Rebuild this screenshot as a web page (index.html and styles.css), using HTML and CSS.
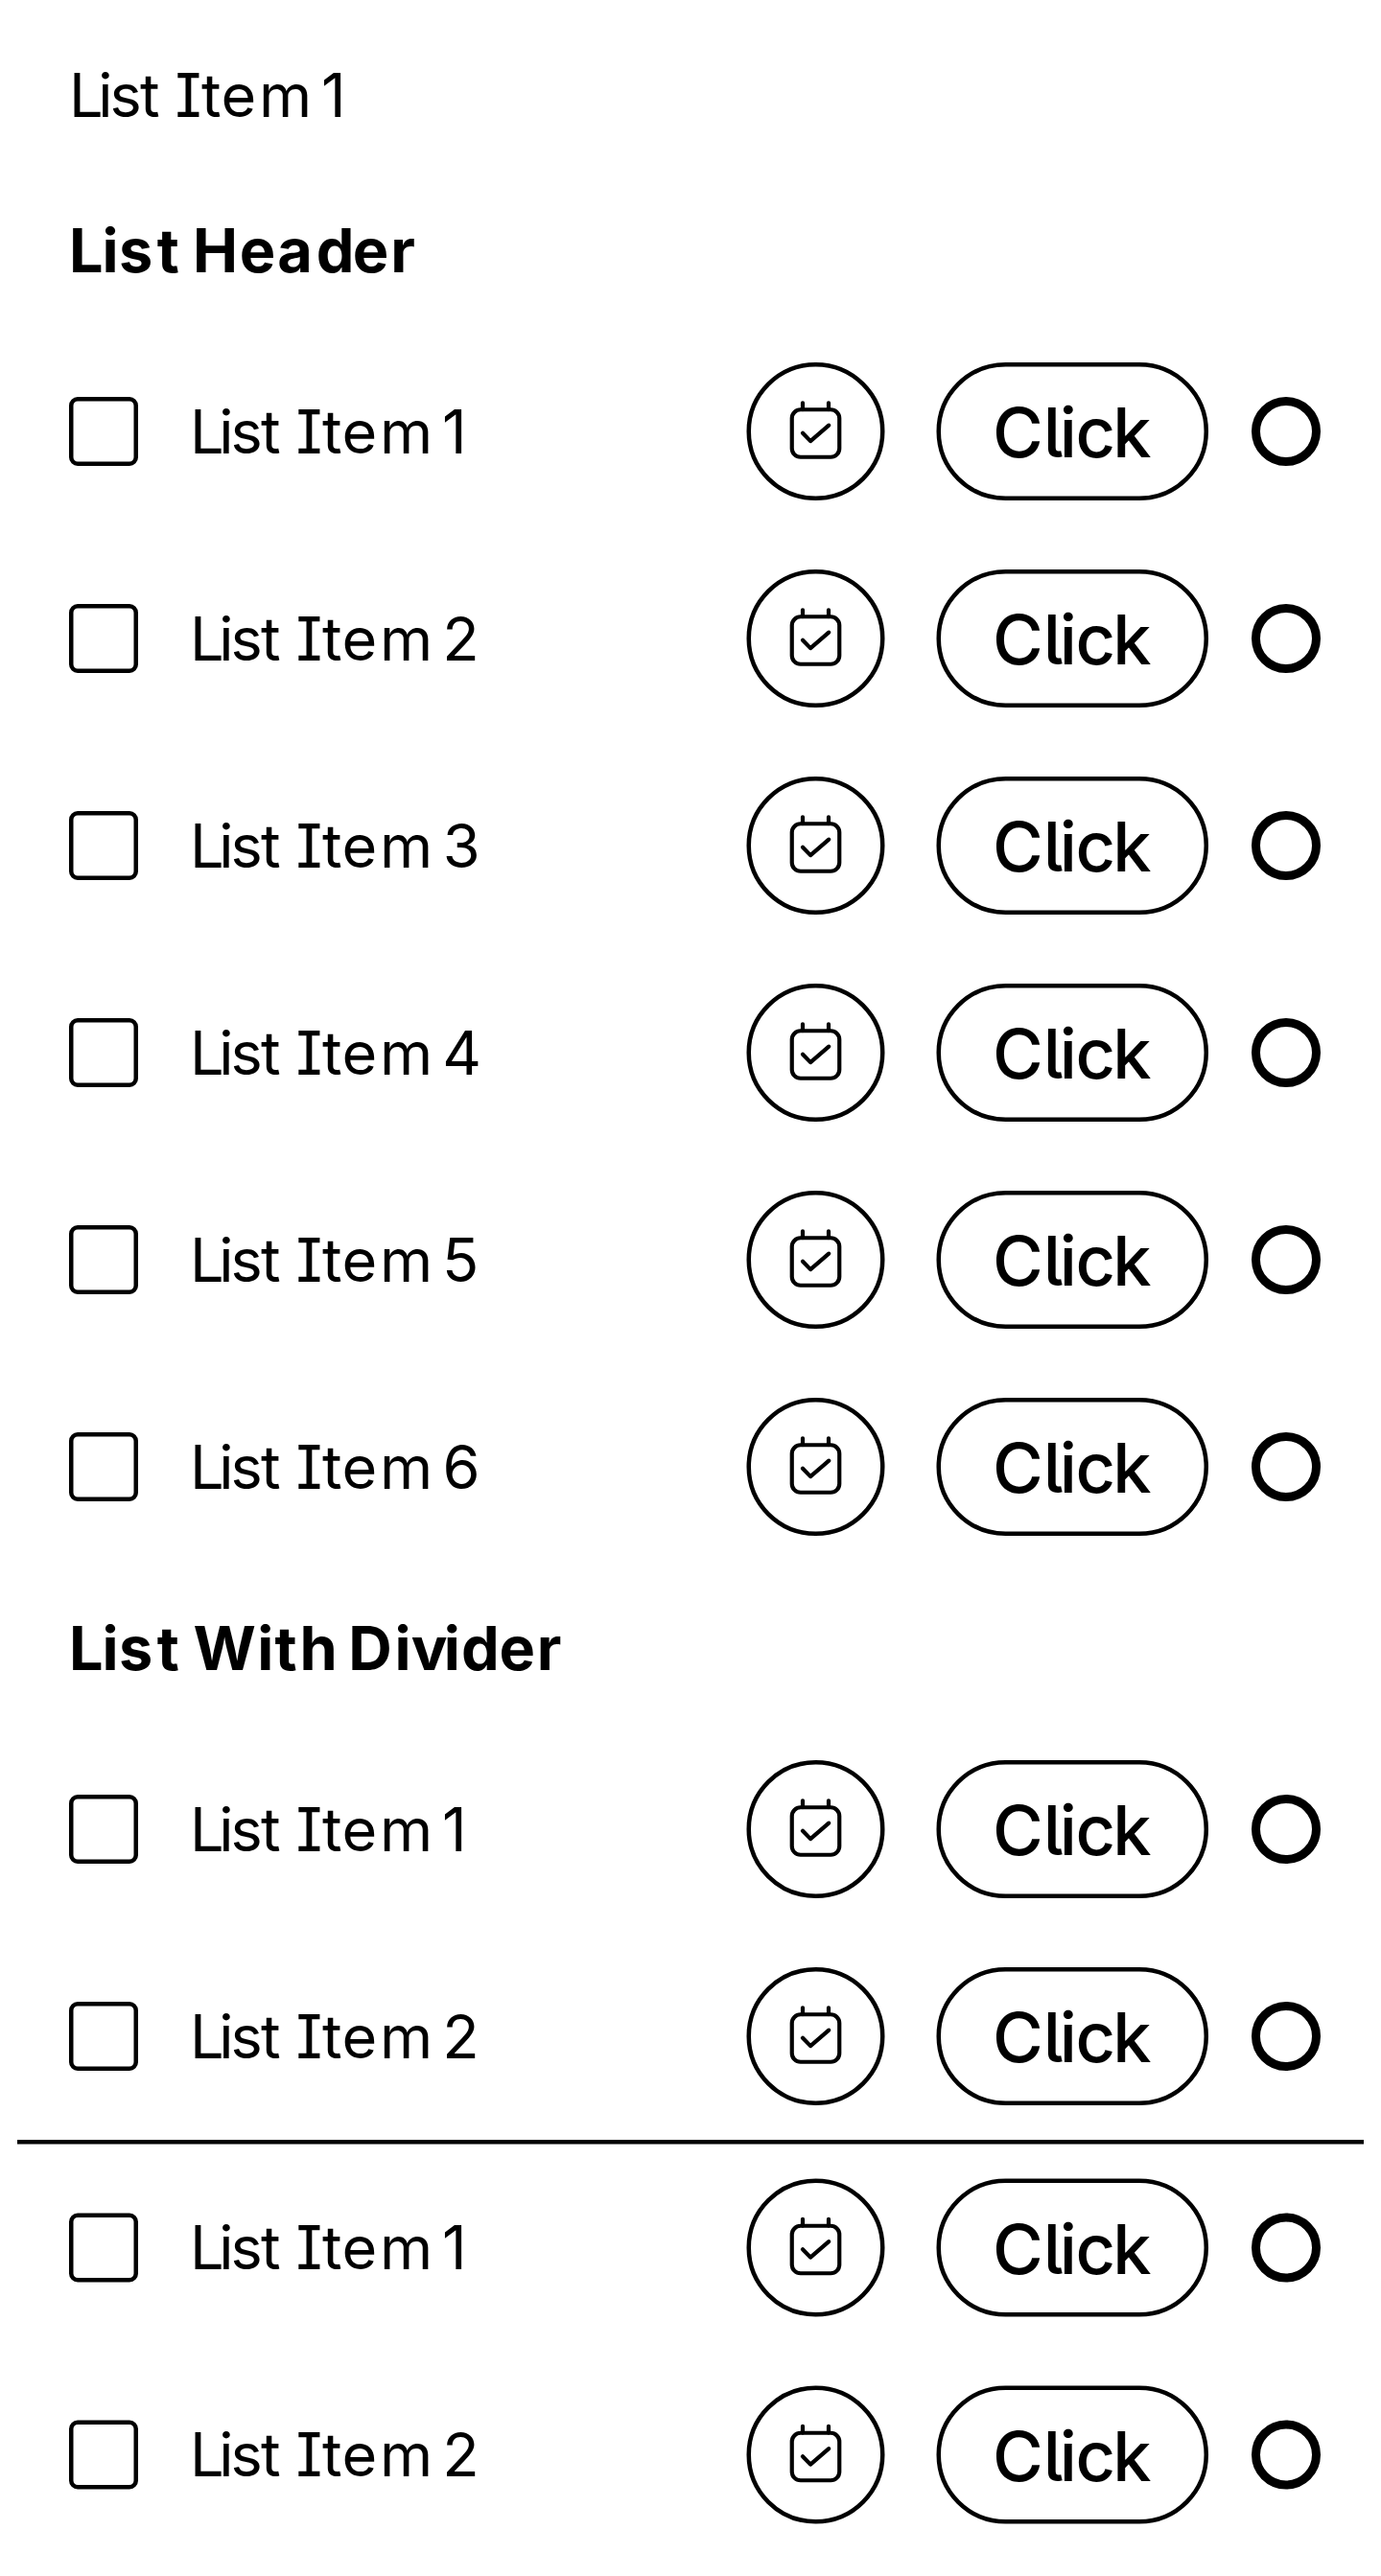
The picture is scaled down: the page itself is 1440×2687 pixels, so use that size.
FILE: index.html
```
<!DOCTYPE html>
<html lang="en">
<head>
<meta charset="utf-8">
<title>Lists</title>
<link rel="stylesheet" href="styles.css">
</head>
<body>
<svg class="sprite" aria-hidden="true">
  <symbol id="calendar-check" viewBox="0 0 16 16">
    <rect x="2.5" y="2.95" width="11" height="11" rx="2"/>
    <path d="M5 1.4V2.9M11 1.4V2.9M5 8.4l1.8 1.85 4.25-3.65"/>
  </symbol>
</svg>
<main class="screen">
  <div class="item item-plain">
    <svg class="label"><text y="15.11" x="0 6.72 9.47 16.42 20.6 24.55 30.67 35.24 44.02 55 58.47">List Item 1</text></svg>
  </div>
  <h2 class="header"><svg class="label"><text y="15.11" x="0 7.66 11.57 20.37 25.3 28.66 39.5 48.26 57.3 65.71 74.5">List Header</text></svg></h2>
  <div class="item">
    <span class="checkbox"></span>
    <svg class="label"><text y="15.11" x="0 6.72 9.47 16.42 20.6 24.55 30.67 35.24 44.02 55 58.47">List Item 1</text></svg>
    <button class="icon-button"><svg class="icon"><use href="#calendar-check"/></svg></button>
    <button class="button"><svg class="caption"><text y="18" x="0 11.71 15.48 19.21 27.86">Click</text></svg></button>
    <span class="radio"></span>
  </div>
  <div class="item">
    <span class="checkbox"></span>
    <svg class="label"><text y="15.11" x="0 6.72 9.47 16.42 20.6 24.55 30.67 35.24 44.02 55 58.5">List Item 2</text></svg>
    <button class="icon-button"><svg class="icon"><use href="#calendar-check"/></svg></button>
    <button class="button"><svg class="caption"><text y="18" x="0 11.71 15.48 19.21 27.86">Click</text></svg></button>
    <span class="radio"></span>
  </div>
  <div class="item">
    <span class="checkbox"></span>
    <svg class="label"><text y="15.11" x="0 6.72 9.47 16.42 20.6 24.55 30.67 35.24 44.02 55 58.6">List Item 3</text></svg>
    <button class="icon-button"><svg class="icon"><use href="#calendar-check"/></svg></button>
    <button class="button"><svg class="caption"><text y="18" x="0 11.71 15.48 19.21 27.86">Click</text></svg></button>
    <span class="radio"></span>
  </div>
  <div class="item">
    <span class="checkbox"></span>
    <svg class="label"><text y="15.11" x="0 6.72 9.47 16.42 20.6 24.55 30.67 35.24 44.02 55 58.5">List Item 4</text></svg>
    <button class="icon-button"><svg class="icon"><use href="#calendar-check"/></svg></button>
    <button class="button"><svg class="caption"><text y="18" x="0 11.71 15.48 19.21 27.86">Click</text></svg></button>
    <span class="radio"></span>
  </div>
  <div class="item">
    <span class="checkbox"></span>
    <svg class="label"><text y="15.11" x="0 6.72 9.47 16.42 20.6 24.55 30.67 35.24 44.02 55 58.45">List Item 5</text></svg>
    <button class="icon-button"><svg class="icon"><use href="#calendar-check"/></svg></button>
    <button class="button"><svg class="caption"><text y="18" x="0 11.71 15.48 19.21 27.86">Click</text></svg></button>
    <span class="radio"></span>
  </div>
  <div class="item">
    <span class="checkbox"></span>
    <svg class="label"><text y="15.11" x="0 6.72 9.47 16.42 20.6 24.55 30.67 35.24 44.02 55 58.55">List Item 6</text></svg>
    <button class="icon-button"><svg class="icon"><use href="#calendar-check"/></svg></button>
    <button class="button"><svg class="caption"><text y="18" x="0 11.71 15.48 19.21 27.86">Click</text></svg></button>
    <span class="radio"></span>
  </div>
  <h2 class="header"><svg class="label"><text y="15.11" x="0 7.66 11.57 20.37 25.3 28.8 43.6 47.65 53.45 61.8 64.74 75.42 79.25 86.83 90.9 99.65 108.4">List With Divider</text></svg></h2>
  <div class="item">
    <span class="checkbox"></span>
    <svg class="label"><text y="15.11" x="0 6.72 9.47 16.42 20.6 24.55 30.67 35.24 44.02 55 58.47">List Item 1</text></svg>
    <button class="icon-button"><svg class="icon"><use href="#calendar-check"/></svg></button>
    <button class="button"><svg class="caption"><text y="18" x="0 11.71 15.48 19.21 27.86">Click</text></svg></button>
    <span class="radio"></span>
  </div>
  <div class="item">
    <span class="checkbox"></span>
    <svg class="label"><text y="15.11" x="0 6.72 9.47 16.42 20.6 24.55 30.67 35.24 44.02 55 58.5">List Item 2</text></svg>
    <button class="icon-button"><svg class="icon"><use href="#calendar-check"/></svg></button>
    <button class="button"><svg class="caption"><text y="18" x="0 11.71 15.48 19.21 27.86">Click</text></svg></button>
    <span class="radio"></span>
  </div>
  <div class="divider"></div>
  <div class="item">
    <span class="checkbox"></span>
    <svg class="label"><text y="15.11" x="0 6.72 9.47 16.42 20.6 24.55 30.67 35.24 44.02 55 58.47">List Item 1</text></svg>
    <button class="icon-button"><svg class="icon"><use href="#calendar-check"/></svg></button>
    <button class="button"><svg class="caption"><text y="18" x="0 11.71 15.48 19.21 27.86">Click</text></svg></button>
    <span class="radio"></span>
  </div>
  <div class="item">
    <span class="checkbox"></span>
    <svg class="label"><text y="15.11" x="0 6.72 9.47 16.42 20.6 24.55 30.67 35.24 44.02 55 58.5">List Item 2</text></svg>
    <button class="icon-button"><svg class="icon"><use href="#calendar-check"/></svg></button>
    <button class="button"><svg class="caption"><text y="18" x="0 11.71 15.48 19.21 27.86">Click</text></svg></button>
    <span class="radio"></span>
  </div>
</main>
</body>
</html>
```
FILE: styles.css
```
* {
  box-sizing: border-box;
}

html,
body {
  margin: 0;
  width: 1440px;
  height: 2687px;
  overflow: hidden;
  background: #fff;
}

.sprite {
  display: none;
}

/* A 320px mobile layout, enlarged to fill the window. */
.screen {
  width: 320px;
  padding: 4px;
  transform: scale(4.5);
  transform-origin: 0 0;
  color: #000;
  font: 400 14px/20px Inter, sans-serif;
  font-feature-settings: "cv05", "cv08";
}

.item {
  display: flex;
  align-items: center;
  height: 48px;
  padding: 0 10px 0 12px;
}

.item-plain {
  height: 36px;
}

.label {
  display: block;
  flex: 1;
  min-width: 0;
  height: 20px;
  overflow: visible;
  fill: currentColor;
}

.header {
  display: flex;
  margin: 0;
  height: 36px;
  padding: 8px 12px;
  font-size: 14px;
  line-height: 20px;
  font-weight: 700;
}

.checkbox {
  width: 16px;
  height: 16px;
  margin-right: 12px;
  border: 1px solid #000;
  border-radius: 2px;
}

.icon-button,
.button {
  display: flex;
  align-items: center;
  justify-content: center;
  height: 32px;
  margin: 0 0 0 12px;
  border: 1px solid #000;
  border-radius: 16px;
  background: transparent;
  color: inherit;
}

.icon-button {
  width: 32px;
  padding: 0;
}

.button {
  width: 63px;
  padding: 0 11.76px 0 12.24px;
  font: 500 16px/24px Inter, sans-serif;
  font-feature-settings: inherit;
}

.caption {
  display: block;
  width: 37px;
  height: 24px;
  overflow: visible;
  fill: currentColor;
}

.icon {
  width: 16px;
  height: 16px;
  flex: none;
  fill: none;
  stroke: #000;
  stroke-width: 0.93;
  stroke-linecap: round;
  stroke-linejoin: round;
}

.radio {
  width: 16px;
  height: 16px;
  margin-left: 10px;
  border: 2px solid #000;
  border-radius: 50%;
}

.divider {
  height: 1px;
  background: #000;
}
```
